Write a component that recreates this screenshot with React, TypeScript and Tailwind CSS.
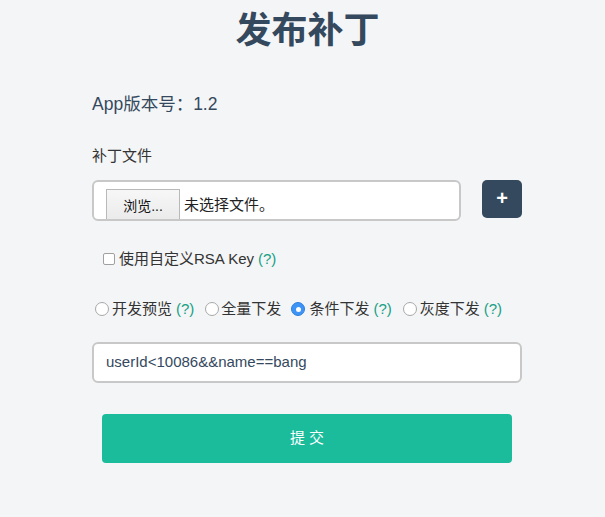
import React from "react";

const Q = () => <span className="text-[#16a085] ml-[4px]">(?)</span>;

function Radio({ checked }: { checked?: boolean }) {
  if (checked) {
    return (
      <span className="w-[14px] h-[14px] rounded-full bg-[#3d94f6] border border-[#2f7fdc] flex items-center justify-center shrink-0">
        <span className="w-[5px] h-[5px] rounded-full bg-white" />
      </span>
    );
  }
  return <span className="w-[14px] h-[14px] rounded-full bg-white border border-[#a8a8a8] shrink-0" />;
}

export default function App() {
  return (
    <div
      className="min-h-[517px] bg-[#f4f5f6] text-[#333]"
      style={{ fontFamily: '"Liberation Sans", "Noto Sans CJK SC", sans-serif' }}
    >
      <div className="ml-[92px] w-[430px] pt-[8px] flex flex-col">
        <h1 className="h-[46px] leading-[46px] text-[36px] font-bold text-center text-[#34495e] pl-[1px]">
          发布补丁
        </h1>
        <div className="mt-[38px] h-[24px] leading-[24px] text-[17.5px] text-[#34495e]">
          App版本号：1.2
        </div>
        <div className="mt-[30px] h-[20px] leading-[20px] text-[15px] text-[#333]">补丁文件</div>
        <div className="mt-[14px] flex items-start gap-[21px]">
          <div className="w-[369px] h-[41px] rounded-[6px] border-2 border-[#c8c8c8] bg-white overflow-hidden flex items-end pl-[12px]">
            <div className="w-[74px] h-[30px] bg-gradient-to-b from-[#f7f7f7] to-[#ebebeb] border border-[#b9b9b9] border-b-0 flex items-center justify-center text-[14px] text-[#111] pt-[3px]">
              浏览...
            </div>
            <div className="ml-[4px] h-[30px] flex items-center text-[15px] text-[#222] pt-[3px]">未选择文件。</div>
          </div>
          <button className="w-[40px] h-[38px] rounded-[5px] bg-[#34495e] text-white text-[20px] font-bold flex items-center justify-center leading-none pb-[2px]">
            +
          </button>
        </div>
        <div className="mt-[28px] h-[20px] flex items-center text-[15px] text-[#333] pl-[11px]">
          <span className="w-[12px] h-[12px] rounded-[2px] border border-[#a0a0a0] bg-white mr-[4px] shrink-0" />
          <span>使用自定义RSA Key</span>
          <Q />
        </div>
        <div className="mt-[30px] h-[20px] flex items-center text-[15px] text-[#333] pl-[3px]">
          <Radio />
          <span className="ml-[3px]">开发预览</span>
          <Q />
          <span className="ml-[11px]" />
          <Radio />
          <span className="ml-[2px]">全量下发</span>
          <span className="ml-[10px]" />
          <Radio checked />
          <span className="ml-[4px]">条件下发</span>
          <Q />
          <span className="ml-[11px]" />
          <Radio />
          <span className="ml-[3px]">灰度下发</span>
          <Q />
        </div>
        <div className="mt-[23px] h-[41px] rounded-[6px] border-2 border-[#c8c8c8] bg-white flex items-center pl-[12px] text-[15px] text-[#34495e]">
          userId&lt;10086&amp;&amp;name==bang
        </div>
        <button className="mt-[31px] mx-[10px] h-[49px] rounded-[4px] bg-[#1abc9c] text-white text-[15px] tracking-[4px] flex items-center justify-center pl-[4px]">
          提交
        </button>
      </div>
    </div>
  );
}
